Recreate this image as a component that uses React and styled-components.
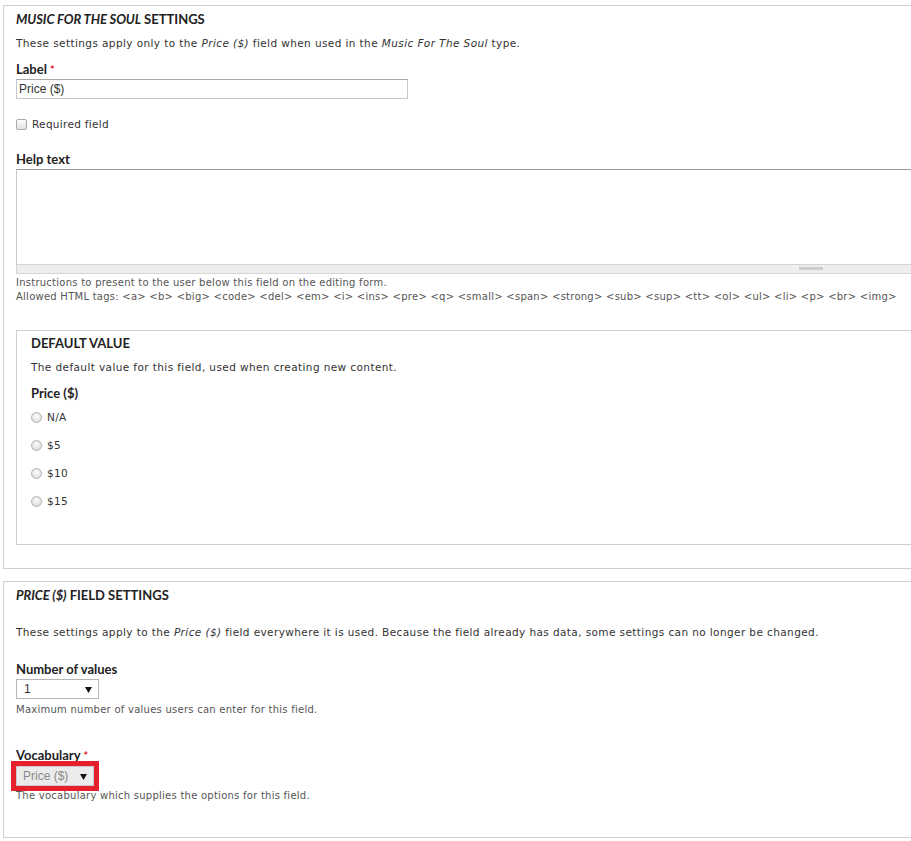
import React from "react";
import styled, { createGlobalStyle } from "styled-components";

const Global = createGlobalStyle`
  html, body { margin: 0; padding: 0; background: #fff; overflow: hidden; }
  body { font-family: "DejaVu Sans", "Liberation Sans", sans-serif; color: #333; }
`;

const Page = styled.div`
  width: 1700px;
  padding: 5px 0 0 3px;
`;

const Fieldset = styled.section`
  border: 1px solid #cfcfcf;
  padding: 5px 0 ${(p) => p.$pb}px 12px;
  margin-bottom: ${(p) => p.$mb || 0}px;
`;

const Inner = styled.section`
  border: 1px solid #cfcfcf;
  margin-top: 26px;
  padding: 4px 0 35px 14px;
`;

const Title = styled.div`
  font-family: Lato, "Liberation Sans", sans-serif;
  font-weight: 700;
  font-size: 13px;
  line-height: 16px;
  color: #222;
  letter-spacing: 0;
  margin-top: ${(p) => p.$mt || 0}px;
  em { font-style: italic; letter-spacing: -0.1px; }
`;

const Text = styled.div`
  font-size: 10.5px;
  letter-spacing: 0.4px;
  line-height: 16px;
  color: #333;
  white-space: nowrap;
  margin-top: ${(p) => p.$mt || 0}px;
  em { font-style: oblique; }
`;

const Label = styled.div`
  font-family: Lato, "Liberation Sans", sans-serif;
  font-weight: 700;
  font-size: 13px;
  line-height: 16px;
  height: 16px;
  color: #222;
  margin-top: ${(p) => p.$mt || 0}px;
`;

const Req = styled.span`
  color: #e0191d;
  font-size: 11px;
  line-height: 0;
  margin-left: 3px;
`;

const TextInput = styled.div`
  box-sizing: border-box;
  width: 392px;
  height: 20px;
  margin-top: 2px;
  border: 1px solid #c6c6c6;
  border-top-color: #aaa;
  font-family: "Liberation Sans", Arial, sans-serif;
  font-size: 12px;
  line-height: 18px;
  padding-left: 2px;
  color: #333;
`;

const CheckRow = styled.label`
  display: flex;
  align-items: center;
  gap: 5px;
  height: 16px;
  margin-top: ${(p) => p.$mt || 0}px;
  font-size: 10.5px;
  letter-spacing: 0.3px;
  color: #333;
`;

const Check = styled.span`
  box-sizing: border-box;
  width: 11px;
  height: 11px;
  border: 1px solid #a9a9a9;
  border-radius: 2px;
  background: linear-gradient(#fdfdfd, #e2e2e2);
`;

const Radio = styled(Check)`
  border-radius: 50%;
  border-color: #b0b0b0;
  background: radial-gradient(circle at 50% 35%, #fafafa, #d9d9d9);
`;

const TextArea = styled.div`
  width: 1588px;
  margin-top: 2px;
  border-top: 1px solid #9a9a9a;
  border-left: 1px solid #c8c8c8;
  height: 94px;
  background: #fff;
`;

const Grippie = styled.div`
  width: 1589px;
  box-sizing: border-box;
  height: 10px;
  background: #eee;
  border: 1px solid #d4d4d4;
  display: flex;
  justify-content: center;
  align-items: center;
  &::after {
    content: "";
    width: 24px;
    height: 3px;
    background: #cdcdcd;
    margin-top: -2px;
  }
`;

const Desc = styled.div`
  font-size: 10px;
  letter-spacing: 0.25px;
  line-height: 14px;
  color: #555;
  margin-top: ${(p) => p.$mt || 0}px;
  white-space: nowrap;
`;

const Select = styled.div`
  box-sizing: border-box;
  width: ${(p) => p.$w}px;
  height: 20px;
  margin-top: ${(p) => p.$mt || 2}px;
  border: 1px solid ${(p) => (p.$disabled ? "#c9c9c9" : "#b5b5b5")};
  background: ${(p) => (p.$disabled ? "#ebebeb" : "#fff")};
  color: ${(p) => (p.$disabled ? "#8a8a8a" : "#333")};
  font-family: "Liberation Sans", Arial, sans-serif;
  font-size: 12px;
  line-height: 18px;
  padding: 0 6px 0 ${(p) => (p.$disabled ? 6 : 7)}px;
  display: flex;
  justify-content: space-between;
  align-items: center;
  outline: ${(p) => (p.$flag ? "5px solid #e3202b" : "none")};
`;

const Arrow = () => (
  <svg width="7" height="7" viewBox="0 0 7 7">
    <path d="M0 1 L7 1 L3.5 7 Z" fill="#111" />
  </svg>
);

const RadioList = styled.div`
  display: flex;
  flex-direction: column;
  gap: 12px;
  margin-top: 8px;
`;

export default function App() {
  return (
    <>
      <Global />
      <Page>
        <Fieldset $pb={23} $mb={12}>
          <Title>
            <em>MUSIC FOR THE SOUL</em> SETTINGS
          </Title>
          <Text $mt={8}>
            These settings apply only to the <em>Price ($)</em> field when used in the <em>Music For The Soul</em> type.
          </Text>
          <Label $mt={10}>
            Label<Req>*</Req>
          </Label>
          <TextInput>Price ($)</TextInput>
          <CheckRow $mt={17}>
            <Check />
            Required field
          </CheckRow>
          <Label $mt={19}>Help text</Label>
          <TextArea />
          <Grippie />
          <Desc $mt={2}>Instructions to present to the user below this field on the editing form.</Desc>
          <Desc>
            Allowed HTML tags: &lt;a&gt; &lt;b&gt; &lt;big&gt; &lt;code&gt; &lt;del&gt; &lt;em&gt; &lt;i&gt; &lt;ins&gt; &lt;pre&gt; &lt;q&gt; &lt;small&gt; &lt;span&gt; &lt;strong&gt; &lt;sub&gt; &lt;sup&gt; &lt;tt&gt; &lt;ol&gt; &lt;ul&gt; &lt;li&gt; &lt;p&gt; &lt;br&gt; &lt;img&gt;
          </Desc>
          <Inner>
            <Title>DEFAULT VALUE</Title>
            <Text $mt={8}>The default value for this field, used when creating new content.</Text>
            <Label $mt={10}>Price ($)</Label>
            <RadioList>
              {["N/A", "$5", "$10", "$15"].map((v) => (
                <CheckRow key={v}>
                  <Radio />
                  {v}
                </CheckRow>
              ))}
            </RadioList>
          </Inner>
        </Fieldset>

        <Fieldset $pb={34}>
          <Title>
            <em>PRICE ($)</em> FIELD SETTINGS
          </Title>
          <Text $mt={21}>
            These settings apply to the <em>Price ($)</em> field everywhere it is used. Because the field already has data, some settings can no longer be changed.
          </Text>
          <Label $mt={21}>Number of values</Label>
          <Select $w={83}>
            <span>1</span>
            <Arrow />
          </Select>
          <Desc $mt={4}>Maximum number of values users can enter for this field.</Desc>
          <Label $mt={30}>
            Vocabulary<Req>*</Req>
          </Label>
          <Select $w={78} $mt={3} $disabled $flag>
            <span>Price ($)</span>
            <Arrow />
          </Select>
          <Desc $mt={3}>The vocabulary which supplies the options for this field.</Desc>
        </Fieldset>
      </Page>
    </>
  );
}
